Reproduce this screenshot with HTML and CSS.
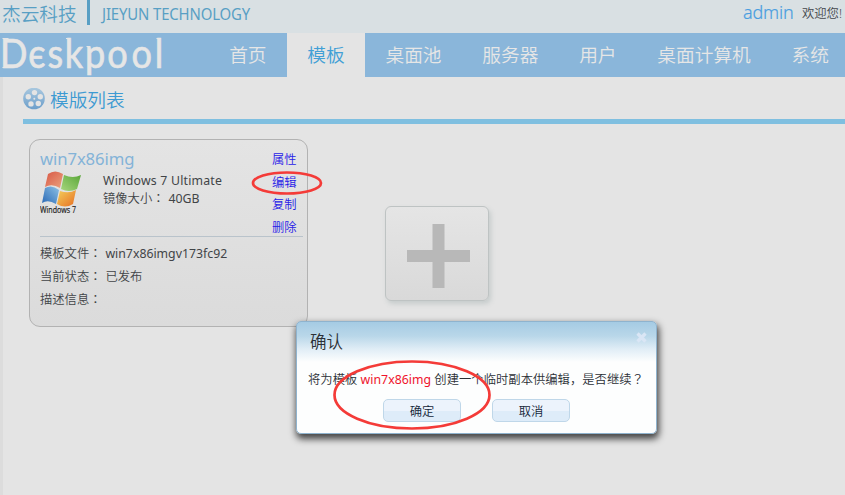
FILE: index.html
```html
<!DOCTYPE html>
<html lang="zh-CN">
<head>
<meta charset="utf-8">
<title>Deskpool</title>
<link rel="stylesheet" href="styles.css">
</head>
<body>
<header class="top">
  <span class="company">杰云科技</span><i class="divider"></i><span class="company-en">JIEYUN TECHNOLOGY</span>
  <span class="user">admin</span><span class="welcome">欢迎您!</span>
</header>
<nav class="nav">
  <svg class="logo" width="166" height="44" viewBox="0 0 166 44"><g transform="scale(.88 1)"><text y="35" x="0 32 54 73.500 96.500 122 149.500 176">Dєskpool</text></g><path d="M2.500 5.500h6M2.500 34.500h6M66 5.500h4M86.500 13.500h4M156.500 5.500h4"/></svg>
  <a>首页</a><a class="active">模板</a><a>桌面池</a><a>服务器</a><a>用户</a><a>桌面计算机</a><a>系统</a>
</nav>
<main class="content">
  <div class="heading">
    <svg width="22" height="22" viewBox="0 0 22 22">
      <defs><linearGradient id="reel" x1="0" y1="0" x2="0" y2="1"><stop offset="0" stop-color="#a9c8df"/><stop offset="1" stop-color="#6d9fcb"/></linearGradient></defs>
      <circle cx="11" cy="10.500" r="10.800" fill="url(#reel)"/>
      <g fill="#e4e4e4"><circle cx="11.5" cy="4.6" r="2.7"/><circle cx="17.3" cy="8.700" r="2.7"/><circle cx="15.3" cy="15.5" r="2.7"/><circle cx="8" cy="15.900" r="2.7"/><circle cx="5.3" cy="8.700" r="2.7"/><circle cx="11.3" cy="10.700" r="1"/></g>
    </svg>
    <h1>模版列表</h1>
  </div>
  <div class="cards">
    <section class="card">
      <div class="summary">
        <div class="about">
          <h2>win7x86img</h2>
          <div class="os">
            <svg width="44" height="46" viewBox="0 0 44 46">
              <defs>
                <linearGradient id="r" x1="0" y1="0" x2="1" y2="1"><stop stop-color="#d85745"/><stop offset="1" stop-color="#eba27e"/></linearGradient>
                <linearGradient id="g" x1="1" y1="0" x2="0" y2="1"><stop stop-color="#59a638"/><stop offset="1" stop-color="#a7d67d"/></linearGradient>
                <linearGradient id="b" x1="0" y1="1" x2="1" y2="0"><stop stop-color="#2968b5"/><stop offset="1" stop-color="#8dc1e5"/></linearGradient>
                <linearGradient id="y" x1="1" y1="1" x2="0" y2="0"><stop stop-color="#e76e23"/><stop offset="1" stop-color="#f4d15c"/></linearGradient>
              </defs>
              <path fill="url(#r)" d="M8 3Q15-2 23 3L20 17Q12 12 5 16Z"/>
              <path fill="url(#g)" d="M24 4Q33 8 41 4L37 18Q29 22 21 18Z"/>
              <path fill="url(#b)" d="M5 17Q12 13 19 19L16 33Q8 28 2 32Z"/>
              <path fill="url(#y)" d="M20 20Q29 23 36 19L33 33Q25 38 17 33Z"/>
              <text class="win" x="0" y="42" textLength="36" lengthAdjust="spacingAndGlyphs">Windows 7</text>
            </svg>
            <div class="specs"><p class="edition">Windows 7 Ultimate</p><p>镜像大小<i lang="zh-TW">：</i> <span class="file">40GB</span></p></div>
          </div>
        </div>
        <div class="actions"><a>属性</a><a class="marked">编辑<svg class="mark" width="72" height="26" viewBox="0 0 72 26"><ellipse cx="36" cy="13" rx="34" ry="10.500"/></svg></a><a>复制</a><a>删除</a></div>
      </div>
      <div class="details">
        <p>模板文件<i lang="zh-TW">：</i> <span class="file">win7x86imgv173fc92</span></p>
        <p>当前状态<i lang="zh-TW">：</i> 已发布</p>
        <p>描述信息<i lang="zh-TW">：</i></p>
      </div>
    </section>
    <a class="add"><svg width="63" height="64" viewBox="0 0 63 64"><path d="M25.5 0h12v26H63v12H37.500v26h-12V38H0V26h25.500z"/></svg></a>
  </div>
</main>
<div class="dialog">
  <div class="dialog-head"><span>确认</span><svg width="11" height="11" viewBox="0 0 11 11"><path d="M1.500 1.500l8 8M9.500 1.500l-8 8"/></svg></div>
  <p class="message">将为模板 <b>win7x86img</b> 创建一个临时副本供编辑，是否继续<i lang="zh-TW">？</i></p>
  <div class="buttons"><button>确定</button><button>取消</button></div>
  <svg class="circle" width="160" height="72" viewBox="0 0 160 72"><ellipse cx="80" cy="36" rx="77.500" ry="33.500"/></svg>
</div>
</body>
</html>
```
FILE: styles.css
```css
* { box-sizing: border-box; margin: 0; padding: 0; }
body {
  width: 845px; height: 495px; overflow: hidden; position: relative;
  background: #e4e4e4; color: #414447;
  font: 350 12.3px/18px "Noto Sans", "Noto Sans CJK SC", sans-serif;
  white-space: nowrap;
}
p, a, span { white-space: nowrap; }
p i { font-family: "Noto Sans CJK TC", sans-serif; font-style: normal; line-height: 1; margin-right: .7px; }
.top { height: 33px; display: flex; align-items: flex-start; background: #d9e0e3; color: #589fc4; padding-left: 2px; line-height: 27px; }
.company { width: 85px; font-size: 18.7px; }
.divider { width: 3px; height: 25px; background: #589fc4; margin-right: 11px; }
.company-en { width: 153px; margin-left: 1px; font-size: 16.6px; line-height: 28px; transform: scaleX(.898); transform-origin: 0 50%; letter-spacing: -.15px; font-weight: 400; }
.user { margin-left: auto; width: 59px; font-size: 18px; color: #4a9ee0; line-height: 25px; font-weight: 300; letter-spacing: -.2px; -webkit-text-stroke: .2px #4a9ee0; }
.welcome { width: 43px; font-size: 12.3px; color: #43474b; line-height: 28px; }
.nav { height: 44px; display: flex; background: #8ab6da; color: #e6e6e6; font-size: 18.7px; line-height: 44px; }
.nav a { padding: 0 20.4px; }
.nav .active { background: #e4e4e4; color: #419fd6; }
.logo { margin-right: 42.8px; flex: none; overflow: visible; }
.logo text { font: 41px "Lato", sans-serif; fill: #e6e6e6; stroke: #e6e6e6; stroke-width: .7px; }
.logo path { stroke: #e6e6e6; stroke-width: 1px; }
.content { border-left: 3px solid #dcdcdc; height: 418px; }
.heading { margin-left: 20px; height: 47px; border-bottom: 5px solid #7fbfe0; display: flex; padding-top: 11px; gap: 5px; }
h1 { font-size: 18.7px; line-height: 24px; font-weight: 350; color: #3d9ad2; }
.cards { display: flex; padding: 15px 0 0 26px; align-items: flex-start; }
.card { width: 279px; height: 188px; border: 1px solid #b2b2b2; border-radius: 11px; background: linear-gradient(#e4e4e4, #dbdbdb); padding: 8px 4px 0 10px; }
.summary { height: 89px; display: flex; justify-content: space-between; border-bottom: 1px solid #b9c3cb; }
h2 { font-size: 16.7px; line-height: 22px; font-weight: 400; color: #84b3d8; letter-spacing: -.1px; }
.os { display: flex; padding-top: 1px; }
.specs { padding: 1px 0 0 19px; }
.edition { font-weight: 400; letter-spacing: .2px; }
.win { font: 8.7px "Open Sans", sans-serif; fill: #222; stroke: #222; stroke-width: .2px; }
.actions { display: flex; flex-direction: column; width: 31px; line-height: 22.7px; padding-top: 1px; color: #2720e8; }
.marked { position: relative; }
.mark { position: absolute; left: -21px; top: -2px; z-index: 2; }
.mark ellipse, .circle ellipse { fill: none; stroke: #f43b38; stroke-width: 2.7px; }
.details { padding-top: 6px; line-height: 22.8px; }
.file { font-weight: 400; }
.add { width: 104px; height: 95px; margin: 67px 0 0 77px; display: flex; align-items: center; justify-content: center; border: 1px solid #bec3c3; border-radius: 6px; background: linear-gradient(#e5e5e5, #d9d9d9); box-shadow: 2px 3px 5px #c6cccc; padding: 4px 0 0 2px; }
.add path { fill: #b8b8b8; }
.dialog { position: absolute; left: 296px; top: 321px; width: 361px; height: 113px; border: 1px solid #8fb3ce; border-radius: 5px; background: linear-gradient(#a5cbe4, #b9d7e9 14px, #e0edf6 27px, #fdfefe 40px); box-shadow: 1px 4px 7px 1px #444; color: #2b3036; }
.dialog-head { height: 42px; display: flex; justify-content: space-between; padding: 8px 9px 0 13px; font-size: 16.5px; line-height: 24px; }
.dialog-head svg { margin-top: 2px; }
.dialog-head path { stroke: #dae6f5; stroke-width: 3.3; }
.message { padding-left: 11px; line-height: 31px; letter-spacing: .03px; }
.message b { color: #ef132c; font-weight: 400; }
.buttons { display: flex; gap: 31px; padding: 4px 0 0 86px; }
button { width: 78px; height: 23px; border: 1px solid #bfd7e9; border-radius: 5px; background: linear-gradient(#ecf3fc 50%, #deecf9 50%); color: #14263a; font: 350 12.3px/20px "Noto Sans CJK SC", sans-serif; }
.circle { position: absolute; left: 35px; top: 37px; }
```
